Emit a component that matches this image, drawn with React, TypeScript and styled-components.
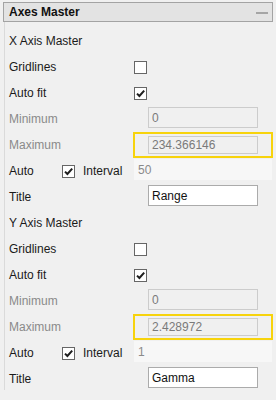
import styled, { createGlobalStyle } from 'styled-components'

const GlobalStyle = createGlobalStyle`
  html, body {
    margin: 0;
    padding: 0;
    background: #f0f0f0;
  }
  body {
    font-family: "Liberation Sans", Arial, sans-serif;
    font-size: 12px;
    color: #1a1a1a;
  }
`

const Panel = styled.div`
  width: 270px;
  padding: 2px 0 0 3px;
`

const Header = styled.div`
  display: flex;
  align-items: center;
  justify-content: space-between;
  height: 18px;
  border: 1px solid #a3a3a3;
  background: #e3e3e3;
  padding: 0 4px 0 5px;
  font-weight: 700;
  font-size: 12px;
  color: #111;
`

const Collapse = styled.span`
  width: 12px;
  height: 2px;
  background: #a5a5a5;
  margin-top: 1px;
`

const Body = styled.div`
  margin-left: 1px;
  border-left: 1px solid #dadada;
  padding: 6px 0 0 4px;
  height: 362px;
`

const Row = styled.div`
  display: flex;
  align-items: center;
  height: 26px;
`

const Label = styled.span<{ $disabled?: boolean; $width?: number; $gap?: number }>`
  width: ${p => (p.$width ? `${p.$width}px` : 'auto')};
  margin-left: ${p => p.$gap ?? 0}px;
  flex: none;
  color: ${p => (p.$disabled ? '#8a8a8a' : '#1a1a1a')};
  white-space: nowrap;
`

const LabelCol = styled(Label)`
  width: 125px;
`

const Box = styled.span`
  display: flex;
  align-items: center;
  justify-content: center;
  width: 11px;
  height: 11px;
  border: 1px solid #666;
  background: #fff;
  flex: none;

  svg {
    width: 11px;
    height: 11px;
  }
`

const FieldSlot = styled.div`
  margin-left: 14px;
  align-self: flex-start;
  margin-top: 1px;
`

const Input = styled.div<{ $disabled?: boolean; $height?: number }>`
  box-sizing: border-box;
  width: 110px;
  height: ${p => p.$height ?? 21}px;
  border: 1px solid ${p => (p.$disabled ? '#cccccc' : '#ababab')};
  background: ${p => (p.$disabled ? '#f0f0f0' : '#fff')};
  color: ${p => (p.$disabled ? '#7a7a7a' : '#111')};
  padding: 0 3px;
  display: flex;
  align-items: center;
  font-size: 12px;
`

const Highlight = styled.div`
  box-sizing: border-box;
  margin-left: -1px;
  width: 140px;
  height: 26px;
  margin-top: -1px;
  border: 2px solid #f7d30c;
  padding: 0 13px;
  display: flex;
  align-items: center;
`

const IntervalField = styled.div`
  box-sizing: border-box;
  width: 138px;
  height: 21px;
  margin-left: auto;
  background: #f7f7f7;
  color: #8a8a8a;
  padding: 0 4px;
  display: flex;
  align-items: center;
  align-self: flex-start;
  margin-top: 1px;
`

const AutoGroup = styled.div`
  display: flex;
  align-items: center;
  width: 263px;
  height: 26px;
`

const Check = ({ checked }: { checked?: boolean }) => (
  <Box>
    {checked && (
      <svg viewBox="0 0 11 11">
        <path d="M2 5.6 L4.4 8 L9.2 2.6" fill="none" stroke="#1e1e1e" strokeWidth="2" />
      </svg>
    )}
  </Box>
)

interface AxisProps {
  name: string
  max: string
  interval: string
  title: string
}

function AxisSection({ name, max, interval, title }: AxisProps) {
  return (
    <>
      <Row>
        <Label>{name}</Label>
      </Row>
      <Row>
        <LabelCol>Gridlines</LabelCol>
        <Check />
      </Row>
      <Row>
        <LabelCol>Auto fit</LabelCol>
        <Check checked />
      </Row>
      <Row>
        <LabelCol $disabled>Minimum</LabelCol>
        <FieldSlot>
          <Input $disabled>0</Input>
        </FieldSlot>
      </Row>
      <Row>
        <LabelCol $disabled>Maximum</LabelCol>
        <Highlight>
          <Input $disabled $height={18}>{max}</Input>
        </Highlight>
      </Row>
      <Row>
        <AutoGroup>
          <Label $width={53}>Auto</Label>
          <Check checked />
          <Label $gap={8}>Interval</Label>
          <IntervalField>{interval}</IntervalField>
        </AutoGroup>
      </Row>
      <Row>
        <LabelCol>Title</LabelCol>
        <FieldSlot>
          <Input>{title}</Input>
        </FieldSlot>
      </Row>
    </>
  )
}

export default function App() {
  return (
    <>
      <GlobalStyle />
      <Panel>
        <Header>
          <span>Axes Master</span>
          <Collapse />
        </Header>
        <Body>
          <AxisSection name="X Axis Master" max="234.366146" interval="50" title="Range" />
          <AxisSection name="Y Axis Master" max="2.428972" interval="1" title="Gamma" />
        </Body>
      </Panel>
    </>
  )
}
